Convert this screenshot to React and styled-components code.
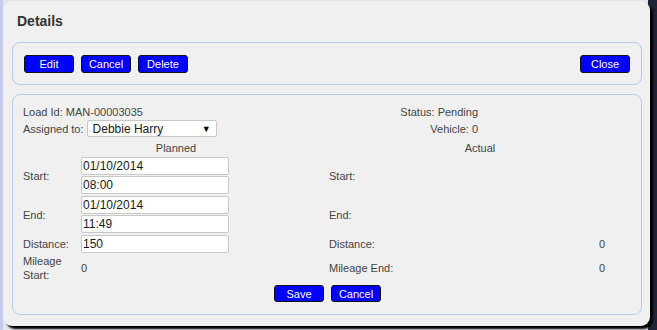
import React from "react";
import styled, { createGlobalStyle } from "styled-components";

const Global = createGlobalStyle`
  html, body { margin: 0; padding: 0; }
  body {
    font-family: "Liberation Sans", Arial, sans-serif;
    background: #e4e4ea;
  }
`;

const Page = styled.div`
  width: 657px;
  height: 330px;
  box-sizing: border-box;
  padding: 1px 0 0 3px;
  overflow: hidden;
  background: linear-gradient(
    to right,
    #c6cbee 0,
    #c6cbee 3px,
    #e6e6ea 3px,
    #e6e6ea 648px,
    #1e2433 648px
  );
`;

const Dialog = styled.div`
  width: 647px;
  height: 325px;
  box-sizing: border-box;
  background: #f0f0f0;
  border-radius: 9px;
  box-shadow: 3px 3px 2px #000;
  padding: 0 8px 0 9px;
  display: flex;
  flex-direction: column;
`;

const Title = styled.h1`
  margin: 0;
  height: 41px;
  box-sizing: border-box;
  padding: 12px 0 0 5px;
  font-size: 14px;
  line-height: 16px;
  font-weight: bold;
  color: #333;
`;

const Frame = styled.div`
  border: 1px solid #b9cce4;
  border-radius: 8px;
  box-sizing: border-box;
`;

const Toolbar = styled(Frame)`
  height: 43px;
  display: flex;
  align-items: center;
  gap: 7px;
  padding: 0 11px 0 11px;
`;

const Spacer = styled.div`
  flex: 1;
`;

const Button = styled.button`
  width: 50px;
  height: ${(p) => (p.$small ? "17px" : "18px")};
  box-sizing: border-box;
  padding: 0;
  background: #0000ff;
  border: 1px solid #111;
  border-radius: 3px;
  color: #fff;
  font-family: "Liberation Sans", Arial, sans-serif;
  font-size: 11px;
  line-height: 14px;
  cursor: pointer;
`;

const Panel = styled(Frame)`
  margin-top: 9px;
  padding: 10px 10px 12px 10px;
`;

const Grid = styled.div`
  display: grid;
  grid-template-columns: 58px 248px 150px 152px;
  font-size: 11px;
  line-height: 14px;
  color: #444;
`;

const Cell = styled.div`
  grid-column: ${(p) => p.$span || "auto"};
  display: flex;
  align-items: center;
  justify-content: ${(p) =>
    p.$align === "right" ? "flex-end" : p.$align === "center" ? "center" : "flex-start"};
  padding: ${(p) => p.$pad || "0"};
`;

const Value = styled(Cell)`
  padding-left: ${(p) => p.$indent || "0"};
`;

const Stack = styled.div`
  display: flex;
  flex-direction: column;
  gap: 1px;
  padding: 1px 0;
`;

const Input = styled.input`
  width: 148px;
  height: 18px;
  box-sizing: border-box;
  margin: 0;
  border: 1px solid #c8c8c8;
  border-radius: 2px;
  padding: 0 1px;
  background: #fff;
  font-family: "Liberation Sans", Arial, sans-serif;
  font-size: 12px;
  color: #1a1a1a;
  outline: none;
`;

const SelectBox = styled.div`
  position: relative;
  margin-left: 3px;
  width: 130px;
  height: 17px;
  box-sizing: border-box;
  border: 1px solid #c8c8c8;
  border-radius: 2px;
  background: #fff;
`;

const Select = styled.select`
  appearance: none;
  -webkit-appearance: none;
  width: 100%;
  height: 100%;
  border: 0;
  margin: 0;
  padding: 0 0 0 5px;
  background: transparent;
  font-family: "Liberation Sans", Arial, sans-serif;
  font-size: 12px;
  color: #1a1a1a;
  outline: none;
`;

const Arrow = styled.span`
  position: absolute;
  right: 5px;
  top: 1px;
  font-size: 9px;
  line-height: 14px;
  color: #000;
  pointer-events: none;
`;

const Actions = styled.div`
  margin-top: 3px;
  display: flex;
  justify-content: center;
  gap: 7px;
  padding-left: 1px;
`;

export default function App() {
  return (
    <>
      <Global />
      <Page>
        <Dialog>
          <Title>Details</Title>
          <Toolbar>
            <Button>Edit</Button>
            <Button>Cancel</Button>
            <Button>Delete</Button>
            <Spacer />
            <Button>Close</Button>
          </Toolbar>
          <Panel>
            <Grid>
              <Cell $span="1 / 3">Load Id: MAN-00003035</Cell>
              <Cell $align="right" $pad="0 1px 0 0">Status: Pending</Cell>
              <Cell />

              <Cell $span="1 / 3" $pad="1px 0">
                Assigned to:
                <SelectBox>
                  <Select defaultValue="dh">
                    <option value="dh">Debbie Harry</option>
                  </Select>
                  <Arrow>▼</Arrow>
                </SelectBox>
              </Cell>
              <Cell $align="right" $pad="0 1px 0 0">Vehicle: 0</Cell>
              <Cell />

              <Cell $span="1 / 3" $align="center" $pad="3px 0 1px">Planned</Cell>
              <Cell $span="3 / 5" $align="center" $pad="3px 0 1px">Actual</Cell>

              <Cell>Start:</Cell>
              <Stack>
                <Input defaultValue="01/10/2014" />
                <Input defaultValue="08:00" />
              </Stack>
              <Cell>Start:</Cell>
              <Cell />

              <Cell>End:</Cell>
              <Stack>
                <Input defaultValue="01/10/2014" />
                <Input defaultValue="11:49" />
              </Stack>
              <Cell>End:</Cell>
              <Cell />

              <Cell>Distance:</Cell>
              <Stack>
                <Input defaultValue="150" />
              </Stack>
              <Cell>Distance:</Cell>
              <Value $indent="120px">0</Value>

              <Cell>Mileage Start:</Cell>
              <Cell>0</Cell>
              <Cell>Mileage End:</Cell>
              <Value $indent="120px">0</Value>
            </Grid>
            <Actions>
              <Button $small>Save</Button>
              <Button $small>Cancel</Button>
            </Actions>
          </Panel>
        </Dialog>
      </Page>
    </>
  );
}
